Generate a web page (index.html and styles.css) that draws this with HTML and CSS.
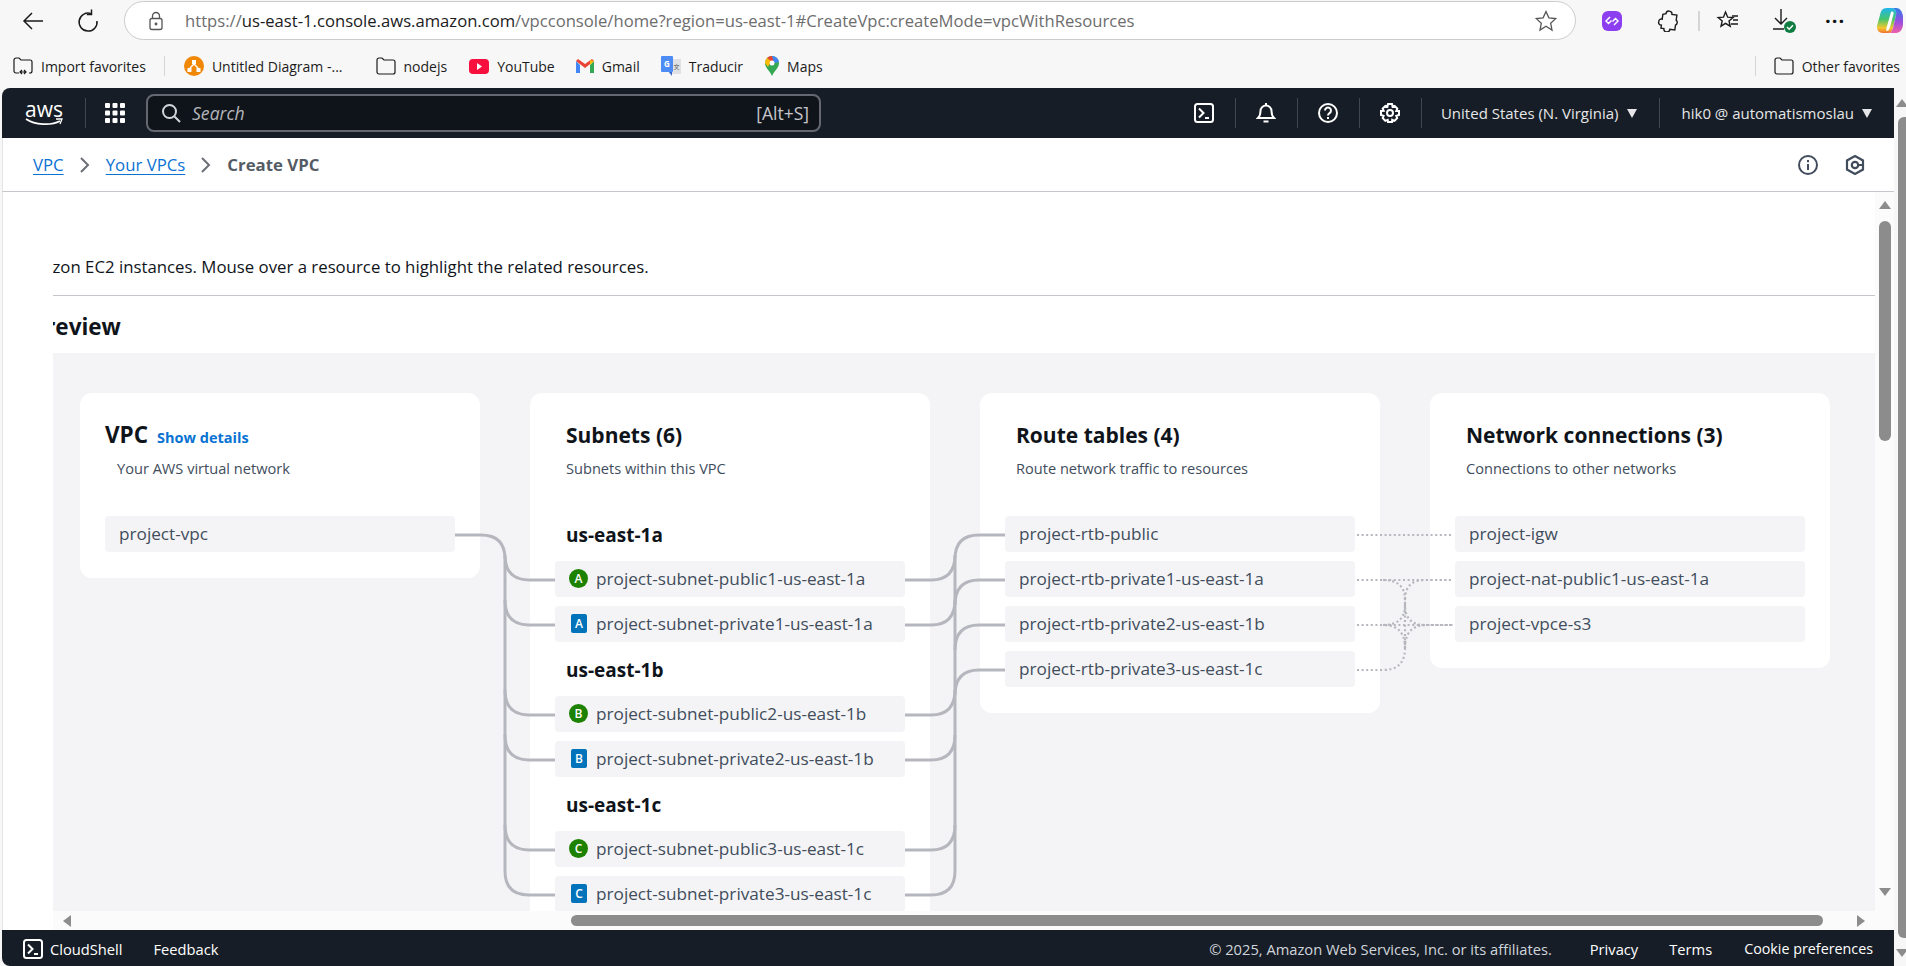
FILE: index.html
```html
<!DOCTYPE html>
<html lang="en">
<head>
  <meta charset="UTF-8">
  <title>Create VPC</title>
  <link rel="stylesheet" href="styles.css">
</head>
<body>

  <!-- browser toolbar -->
  <div class="toolbar">
    <svg class="tool back" width="24" height="24" viewBox="0 0 24 24" fill="none" stroke="#1b1b1b" stroke-width="1.5"><path d="M22 12H3M11 4l-8 8 8 8"/></svg>
    <svg class="tool reload" width="24" height="24" viewBox="0 0 24 24" fill="none" stroke="#1b1b1b" stroke-width="1.5"><path d="M15 4.6A9 9 0 1 0 21 12"/><path d="M15.5 0.5V5.4H10.8"/></svg>
    <div class="address">
      <svg class="lock" width="18" height="20" viewBox="0 0 18 20" fill="none" stroke="#555" stroke-width="1.3"><rect x="3" y="7.5" width="12" height="11" rx="2"/><path d="M5.5 7.5V5a3.5 3.5 0 0 1 7 0v2.5"/><circle cx="9" cy="13" r="0.8" fill="#555"/></svg>
      <span class="url">https://<b>us-east-1.console.aws.amazon.com</b>/vpcconsole/home?region=us-east-1#CreateVpc:createMode=vpcWithResources</span>
      <svg class="star" width="24" height="24" viewBox="0 0 24 24" fill="none" stroke="#555" stroke-width="1.3"><path d="M12 2.5l2.9 6.3 6.8.8-5 4.7 1.3 6.8L12 17.2l-6 3.9 1.3-6.8-5-4.7 6.800-.8z"/></svg>
    </div>
    <div class="ext-icons">
      <svg class="ext" width="22" height="22" viewBox="0 0 22 22"><rect x="1" y="1" width="20" height="20" rx="6" fill="#8c3ff0"/><path d="M9 7l-4 4 2.500 2.500 3-3M13 15l4-4-2.500-2.500-3 3" fill="none" stroke="#fff" stroke-width="1.500"/></svg>
      <svg class="ext puzzle" width="22" height="22" viewBox="0 0 22 22" fill="none" stroke="#1b1b1b" stroke-width="1.4"><path d="M8 4a3 3 0 0 1 6 0h5v5a3 3 0 0 1 0 5v5h-5a3 3 0 0 1-6 0H5v-3a2.500 2.500 0 0 1-3-3 2.500 2.500 0 0 1 3-3V5z" transform="rotate(8 11 11)"/></svg>
      <span class="tool-sep"></span>
      <svg class="ext fav" width="24" height="22" viewBox="0 0 24 22" fill="none" stroke="#1b1b1b" stroke-width="1.4"><path d="M9.500 2l2.200 5.200 5.300.4-4 3.400 1.200 5.200-4.700-2.800L5 16.200l1.200-5.200-4-3.400 5.300-.4z"/><path d="M16 6h6M17 10h5M15 14h7"/></svg>
      <svg class="ext down" width="26" height="26" viewBox="0 0 26 26" fill="none" stroke="#1b1b1b" stroke-width="1.4"><path d="M10 1v15M4 10l6 6 6-6M2 21h11"/><circle cx="19" cy="19" r="6" fill="#107c41" stroke="none"/><path d="M16 19l2.200 2.200 3.800-4" stroke="#fff" stroke-width="1.500"/></svg>
      <span class="ext more">···</span>
      <svg class="ext copilot" width="28" height="28" viewBox="0 0 28 28">
        <defs>
          <linearGradient id="cpA" x1="0" y1="0" x2="0" y2="1"><stop offset="0" stop-color="#1fb5f0"/><stop offset="0.45" stop-color="#45c66b"/><stop offset="0.8" stop-color="#f5c82e"/><stop offset="1" stop-color="#f07030"/></linearGradient>
          <linearGradient id="cpB" x1="0" y1="0" x2="0" y2="1"><stop offset="0" stop-color="#2a7be8"/><stop offset="0.55" stop-color="#9a4ee0"/><stop offset="1" stop-color="#ef5ea6"/></linearGradient>
        </defs>
        <path d="M11 1C6 1 5 4 4 8L1.500 17C0 22 2 26 7 26h5c3 0 4-2 5-5L20 8C21 4 19 1 15 1z" fill="url(#cpA)"/>
        <path d="M15 1h5c4 0 6 3 7 8v8c0 5-3 9-7 9h-8c3 0 4-2 5-5l3-13c1-4-1-7-5-7z" fill="url(#cpB)"/>
        <path d="M15 5c2-1 3 0 2.500 2L14 20c-1 3-2 4-3 4-1 0-1-1-.5-3z" fill="#fff"/>
      </svg>
    </div>
  </div>

  <!-- favorites bar -->
  <div class="favbar">
    <span class="bm first">
      <svg width="20" height="18" viewBox="0 0 20 18" fill="none" stroke="#1b1b1b" stroke-width="1.2"><path d="M6 16H3a2 2 0 0 1-2-2V3a2 2 0 0 1 2-2h3l2 2h9a2 2 0 0 1 2 2v9a2 2 0 0 1-2 2h-1M7 15h6M9 13l-2 2 2 2M11 13l2 2-2 2"/></svg>
      Import favorites
    </span>
    <span class="fav-sep"></span>
    <span class="bm drawio">
      <svg width="20" height="20" viewBox="0 0 20 20"><circle cx="10" cy="10" r="10" fill="#f08705"/><path d="M8 4h4v4H8zM3.500 12h4v4h-4zM12.500 12h4v4h-4z" fill="#fff"/><path d="M10 8l-4 4M10 8l4 4" stroke="#fff" stroke-width="1.400"/></svg>
      Untitled Diagram -...
    </span>
    <span class="bm nodejs">
      <svg width="20" height="18" viewBox="0 0 20 18" fill="none" stroke="#1b1b1b" stroke-width="1.2"><path d="M1 3a2 2 0 0 1 2-2h3l2 2h9a2 2 0 0 1 2 2v10a2 2 0 0 1-2 2H3a2 2 0 0 1-2-2z"/></svg>
      nodejs
    </span>
    <span class="bm youtube">
      <svg width="20" height="15" viewBox="0 0 20 15"><rect width="20" height="15" rx="4" fill="#f70f3d"/><path d="M8 4l5 3.500-5 3.500z" fill="#fff"/></svg>
      YouTube
    </span>
    <span class="bm gmail">
      <svg width="18" height="14" viewBox="0 0 18 14"><path d="M0 2v12h4V6z" fill="#4285f4"/><path d="M14 6v8h4V2z" fill="#34a853"/><path d="M0 2l9 7 9-7-2-2-7 5-7-5z" fill="#ea4335"/><path d="M14 1l4 1-4 4z" fill="#fbbc04"/></svg>
      Gmail
    </span>
    <span class="bm translate">
      <svg width="20" height="20" viewBox="0 0 20 20"><rect x="8" y="3" width="12" height="15" fill="#dfe1e5"/><rect width="12" height="16" rx="1" fill="#4d8bf5"/><path d="M8 16l3 4v-4z" fill="#3a66c8"/><text x="3" y="11" class="g-mark">G</text><text x="12.500" y="13" class="tr-mark">文</text></svg>
      Traducir
    </span>
    <span class="bm maps">
      <svg width="14" height="20" viewBox="0 0 14 20"><path d="M7 20C5 15 0 12 0 7a7 7 0 0 1 14 0c0 5-5 8-7 13z" fill="#34a853"/><path d="M2 2A7 7 0 0 1 7 0l2 4-5 5z" fill="#ea4335"/><path d="M0 7a7 7 0 0 1 2-5l4 3-3 6z" fill="#fbbc04"/><path d="M7 0a7 7 0 0 1 7 6l-5 1z" fill="#4285f4"/><circle cx="7" cy="7" r="2.500" fill="#fff"/></svg>
      Maps
    </span>
    <span class="fav-sep right-sep"></span>
    <span class="bm other">
      <svg width="20" height="18" viewBox="0 0 20 18" fill="none" stroke="#1b1b1b" stroke-width="1.2"><path d="M1 3a2 2 0 0 1 2-2h3l2 2h9a2 2 0 0 1 2 2v10a2 2 0 0 1-2 2H3a2 2 0 0 1-2-2z"/></svg>
      Other favorites
    </span>
  </div>

  <div class="console-wrap">
    <div class="console">

      <!-- aws top nav -->
      <header class="topnav">
        <div class="logo">
          <span class="logo-text">aws</span>
          <svg width="38" height="8" viewBox="0 0 38 8" fill="none"><path d="M1 1c9 6 25 7 34 2" stroke="#fff" stroke-width="1.800"/><path d="M31 1l6 0-2 5" stroke="#fff" stroke-width="1.300"/></svg>
        </div>
        <span class="nav-sep logo-sep"></span>
        <svg class="grid-icon" width="20" height="20" viewBox="0 0 20 20" fill="#fff"><rect width="5" height="5" rx="1"/><rect x="7.500" width="5" height="5" rx="1"/><rect x="15" width="5" height="5" rx="1"/><rect y="7.500" width="5" height="5" rx="1"/><rect x="7.500" y="7.500" width="5" height="5" rx="1"/><rect x="15" y="7.500" width="5" height="5" rx="1"/><rect y="15" width="5" height="5" rx="1"/><rect x="7.500" y="15" width="5" height="5" rx="1"/><rect x="15" y="15" width="5" height="5" rx="1"/></svg>
        <div class="search">
          <svg width="20" height="20" viewBox="0 0 20 20" fill="none" stroke="#d1d5db" stroke-width="2"><circle cx="8.500" cy="8.500" r="6.500"/><path d="M13.500 13.500l5.500 5.500"/></svg>
          <span class="search-ph">Search</span>
          <span class="search-key">[Alt+S]</span>
        </div>
        <div class="nav-right">
          <span class="nav-btn">
            <svg width="20" height="20" viewBox="0 0 20 20" fill="none" stroke="#fff" stroke-width="2"><rect x="1" y="1" width="18" height="18" rx="2.500"/><path d="M5 5.500l4.500 4.500L5 14.500M11 15h4"/></svg>
          </span>
          <span class="nav-btn">
            <svg width="20" height="22" viewBox="0 0 20 22" fill="none" stroke="#fff" stroke-width="2"><path d="M2 16h16c-2-2-2.500-4-2.500-7a5.500 5.500 0 0 0-11 0c0 3-.5 5-2.500 7zM7.500 19.500h5M10 1v2"/></svg>
          </span>
          <span class="nav-btn">
            <svg width="20" height="20" viewBox="0 0 20 20" fill="none" stroke="#fff" stroke-width="2"><circle cx="10" cy="10" r="9"/><path d="M7 7.500a3 3 0 1 1 4.500 2.600c-1 .6-1.500 1-1.500 2.400"/><path d="M10 14v2"/></svg>
          </span>
          <span class="nav-btn">
            <svg width="20" height="20" viewBox="0 0 20 20" fill="none" stroke="#fff" stroke-width="2"><path d="M8 1h4l.6 2.800 2-.9 2.700 2.700-1 2.400L19 8v4l-2.700.9.9 2.200-2.600 2.700-2.400-1L12 19H8l-.3-2.200-2.400 1-2.600-2.700.9-2.200L1 12V8l2.700-.1-1-2.300 2.700-2.700 2 .9z"/><circle cx="10" cy="10" r="3"/></svg>
          </span>
          <span class="nav-menu region">United States (N. Virginia) <i class="caret"></i></span>
          <span class="nav-menu user">hik0 @ automatismoslau <i class="caret"></i></span>
        </div>
      </header>

      <!-- breadcrumbs -->
      <nav class="crumbs">
        <a>VPC</a>
        <svg width="12" height="18" viewBox="0 0 12 18" fill="none" stroke="#6b6f76" stroke-width="2"><path d="M2 2l7 7-7 7"/></svg>
        <a>Your VPCs</a>
        <svg width="12" height="18" viewBox="0 0 12 18" fill="none" stroke="#6b6f76" stroke-width="2"><path d="M2 2l7 7-7 7"/></svg>
        <span class="current">Create VPC</span>
        <span class="crumb-icons">
          <svg width="20" height="20" viewBox="0 0 20 20" fill="none" stroke="#414d5c" stroke-width="2"><circle cx="10" cy="10" r="9"/><path d="M10 9v6M10 5v2.200"/></svg>
          <svg width="20" height="20" viewBox="0 0 20 20" fill="none" stroke="#414d5c" stroke-width="2.200"><path d="M10 1l8 4.500v9L10 19l-8-4.500v-9z"/><circle cx="10" cy="10" r="3.200"/><path d="M12 10h5"/></svg>
        </span>
      </nav>

      <div class="content">
        <div class="scroll-col">
          <div class="clip">
            <p class="intro">Amazon EC2 instances. Mouse over a resource to highlight the related resources.</p>
            <hr class="rule">
            <h2 class="preview-title">Preview</h2>

            <div class="panel">
              <div class="cards">

                <section class="card">
                  <div class="card-head vpc-head">
                    <h3>VPC <a class="details">Show details</a></h3>
                    <p>Your AWS virtual network</p>
                  </div>
                  <div class="rows">
                    <div class="item">project-vpc</div>
                  </div>
                </section>

                <section class="card">
                  <div class="card-head">
                    <h3>Subnets (6)</h3>
                    <p>Subnets within this VPC</p>
                  </div>
                  <div class="rows">
                    <h4 class="az">us-east-1a</h4>
                    <div class="item subnet"><span class="badge pub">A</span>project-subnet-public1-us-east-1a</div>
                    <div class="item subnet"><span class="badge priv">A</span>project-subnet-private1-us-east-1a</div>
                    <h4 class="az">us-east-1b</h4>
                    <div class="item subnet"><span class="badge pub">B</span>project-subnet-public2-us-east-1b</div>
                    <div class="item subnet"><span class="badge priv">B</span>project-subnet-private2-us-east-1b</div>
                    <h4 class="az">us-east-1c</h4>
                    <div class="item subnet"><span class="badge pub">C</span>project-subnet-public3-us-east-1c</div>
                    <div class="item subnet"><span class="badge priv">C</span>project-subnet-private3-us-east-1c</div>
                  </div>
                </section>

                <section class="card">
                  <div class="card-head">
                    <h3>Route tables (4)</h3>
                    <p>Route network traffic to resources</p>
                  </div>
                  <div class="rows">
                    <div class="item">project-rtb-public</div>
                    <div class="item">project-rtb-private1-us-east-1a</div>
                    <div class="item">project-rtb-private2-us-east-1b</div>
                    <div class="item">project-rtb-private3-us-east-1c</div>
                  </div>
                </section>

                <section class="card">
                  <div class="card-head">
                    <h3>Network connections (3)</h3>
                    <p>Connections to other networks</p>
                  </div>
                  <div class="rows">
                    <div class="item">project-igw</div>
                    <div class="item">project-nat-public1-us-east-1a</div>
                    <div class="item">project-vpce-s3</div>
                  </div>
                </section>

              </div>

              <!-- lines between the cards -->
              <svg class="links" width="1822" height="600" viewBox="0 0 1822 600" fill="none">
                <g class="solid">
                  <path d="M402 182H428Q452 182 452 206V518Q452 542 476 542H502"/>
                  <path d="M452 202Q452 227 476 227H502"/>
                  <path d="M452 247Q452 272 476 272H502"/>
                  <path d="M452 337Q452 362 476 362H502"/>
                  <path d="M452 382Q452 407 476 407H502"/>
                  <path d="M452 472Q452 497 476 497H502"/>
                  <path d="M852 227H878Q902 227 902 202"/>
                  <path d="M852 272H878Q902 272 902 247"/>
                  <path d="M852 362H878Q902 362 902 337"/>
                  <path d="M852 407H878Q902 407 902 382"/>
                  <path d="M852 497H878Q902 497 902 472"/>
                  <path d="M852 542H878Q902 542 902 518V206Q902 182 926 182H952"/>
                  <path d="M902 252Q902 227 926 227H952"/>
                  <path d="M902 297Q902 272 926 272H952"/>
                  <path d="M902 342Q902 317 926 317H952"/>
                </g>
                <g class="dotted">
                  <path d="M1304 182H1400"/>
                  <path d="M1304 227H1400"/>
                  <path d="M1304 272H1400"/>
                  <path d="M1304 317H1330Q1352 317 1352 295V247Q1352 227 1372 227H1400"/>
                  <path d="M1330 227Q1352 227 1352 247V252Q1352 272 1372 272H1400"/>
                  <path d="M1330 272Q1352 272 1352 252"/>
                  <path d="M1352 295Q1352 272 1374 272"/>
                  <path d="M1352 295Q1352 272 1330 272"/>
                </g>
              </svg>
            </div>
          </div>

          <div class="hbar">
            <i class="arrow-left"></i>
            <span class="hthumb"></span>
            <i class="arrow-right"></i>
          </div>
        </div>

        <div class="vbar">
          <i class="arrow-up"></i>
          <span class="vthumb"></span>
          <i class="arrow-down"></i>
        </div>
      </div>

      <!-- console footer -->
      <footer class="footer">
        <svg width="20" height="20" viewBox="0 0 20 20" fill="none" stroke="#fff" stroke-width="2"><rect x="1" y="1" width="18" height="18" rx="2.500"/><path d="M5 5.500l4.500 4.500L5 14.500M11 15h4"/></svg>
        <span class="foot-link shell">CloudShell</span>
        <span class="foot-link feedback">Feedback</span>
        <span class="copy">© 2025, Amazon Web Services, Inc. or its affiliates.</span>
        <span class="foot-link privacy">Privacy</span>
        <span class="foot-link terms">Terms</span>
        <span class="foot-link cookie">Cookie preferences</span>
      </footer>
    </div>

    <div class="page-scroll">
      <i class="arrow-up"></i>
      <span class="page-thumb"></span>
      <i class="arrow-down"></i>
    </div>
  </div>

</body>
</html>
```

FILE: styles.css
```css
html, body {
  margin: 0;
  height: 966px;
  overflow: hidden;
}

body {
  display: flex;
  flex-direction: column;
  background: #f7f7f7;
  font-family: "Open Sans", "Noto Sans", sans-serif;
  color: #0f141a;
}

/* browser chrome */
.toolbar {
  height: 44px;
  display: flex;
  align-items: flex-start;
  padding-top: 1px;
  box-sizing: border-box;
}

.tool {
  flex: none;
  margin-top: 8px;
}

.back { margin-left: 21px; }
.reload { margin-left: 31px; }

.address {
  flex: none;
  width: 1452px;
  height: 39px;
  margin-left: 24px;
  box-sizing: border-box;
  border: 1px solid #ccc;
  border-radius: 20px;
  background: #fff;
  display: flex;
  align-items: center;
  padding-left: 22px;
}

.url {
  margin-left: 20px;
  font-size: 16.65px;
  color: #6d6d6d;
  white-space: nowrap;
}

.url b {
  font-weight: 400;
  color: #1b1b1b;
}

.star { margin-left: auto; margin-right: 17px; }

.ext-icons {
  flex: 1;
  display: flex;
  align-items: center;
  height: 39px;
}

.ext { flex: none; }
.ext-icons > :first-child { margin-left: 25px; }
.puzzle { margin-left: 34px; }
.tool-sep { width: 2px; height: 20px; background: #d5d5d5; margin-left: 19px; }
.fav { margin-left: 16px; }
.down { margin-left: 31px; }
.more { margin-left: 28px; font-size: 20px; font-weight: 700; letter-spacing: 1px; line-height: 1; }
.copilot { margin-left: 31px; }

.favbar {
  height: 44px;
  display: flex;
  align-items: center;
  font-size: 14px;
  color: #1b1b1b;
  padding-right: 6px;
  box-sizing: border-box;
}

.bm {
  display: flex;
  align-items: center;
  white-space: nowrap;
  flex: none;
}

.bm svg { margin-right: 8px; }

.first { margin-left: 13px; }
.fav-sep { width: 1px; height: 20px; background: #d5d5d5; margin-left: 18px; flex: none; }
.drawio { margin-left: 19px; }
.nodejs { margin-left: 33px; }
.youtube { margin-left: 22px; }
.gmail { margin-left: 21px; }
.translate { margin-left: 21px; }
.maps { margin-left: 22px; }
.right-sep { margin-left: auto; }
.other { margin-left: 18px; }

.g-mark { font-size: 8px; font-weight: 700; fill: #fff; }
.tr-mark { font-size: 6px; fill: #555; font-family: "Noto Sans CJK SC", sans-serif; }

/* console */
.console-wrap {
  flex: 1;
  display: flex;
  min-height: 0;
}

.console {
  width: 1892px;
  margin-left: 2px;
  display: flex;
  flex-direction: column;
  background: #fff;
  border-radius: 8px 0 0 8px;
  overflow: hidden;
}

.topnav {
  height: 50px;
  flex: none;
  background: #161d26;
  display: flex;
  align-items: center;
  color: #fff;
}

.logo {
  margin-left: 23px;
  width: 38px;
  display: flex;
  flex-direction: column;
  align-items: center;
}

.logo-text {
  font-size: 21px;
  line-height: 17px;
  letter-spacing: 0;
}

.nav-sep {
  width: 1px;
  height: 30px;
  background: #424650;
}

.logo-sep { margin-left: 22px; }
.grid-icon { margin-left: 19px; }

.search {
  width: 675px;
  height: 38px;
  margin-left: 21px;
  box-sizing: border-box;
  border: 2px solid #656871;
  border-radius: 8px;
  background: #0f141a;
  display: flex;
  align-items: center;
  padding: 0 10px 0 13px;
}

.search-ph {
  margin-left: 11px;
  font-size: 17.6px;
  font-style: italic;
  color: #b4b4bb;
}

.search-key {
  margin-left: auto;
  font-size: 17.5px;
  color: #c6c6cd;
}

.nav-right {
  margin-left: auto;
  display: flex;
  align-items: center;
}

.nav-btn {
  width: 61px;
  height: 30px;
  border-right: 1px solid #424650;
  box-sizing: content-box;
  display: flex;
  align-items: center;
  justify-content: center;
}

.nav-menu {
  height: 30px;
  display: flex;
  align-items: center;
  font-size: 15px;
  color: #e6e6e8;
  white-space: nowrap;
  padding: 0 22px;
}

.region {
  padding-left: 19px;
  border-right: 1px solid #424650;
}

.caret {
  width: 0;
  height: 0;
  margin-left: 8px;
  border-left: 5px solid transparent;
  border-right: 5px solid transparent;
  border-top: 9px solid #e6e6e8;
}

.crumbs {
  height: 54px;
  flex: none;
  box-sizing: border-box;
  border-bottom: 1px solid #c6c6cd;
  border-left: 1px solid #e4e4e4;
  padding: 0 29px 0 30px;
  display: flex;
  align-items: center;
  font-size: 16.8px;
}

.crumbs a {
  color: #0972d3;
  text-decoration: underline;
  text-underline-offset: 3px;
}

.crumbs svg { margin: 0 15px; }

.current {
  color: #545b64;
  font-weight: 700;
}

.crumb-icons {
  margin-left: auto;
  display: flex;
  align-items: center;
}

.crumb-icons svg { margin: 0 0 0 27px; }

.content {
  flex: 1;
  display: flex;
  min-height: 0;
  border-left: 1px solid #e4e4e4;
}

.scroll-col {
  width: 1872px;
  flex: none;
  display: flex;
  flex-direction: column;
  padding-left: 50px;
  box-sizing: border-box;
}

.clip {
  flex: 1;
  min-height: 0;
  overflow: hidden;
}

.intro {
  margin: 64px 0 0 -36px;
  font-size: 16.8px;
  line-height: 22px;
  white-space: nowrap;
}

.rule {
  margin: 17px 0 0;
  border: none;
  border-top: 1px solid #c6c6cd;
}

.preview-title {
  margin: 19px 0 14px -22px;
  font-size: 22.5px;
  line-height: 24px;
  font-weight: 700;
}

.panel {
  position: relative;
  background: #f4f4f6;
  padding: 40px 0 40px 27px;
}

.cards {
  display: flex;
  align-items: flex-start;
  gap: 50px;
}

.card {
  width: 400px;
  flex: none;
  box-sizing: border-box;
  background: #fff;
  border-radius: 12px;
  padding: 28px 25px 26px;
}

.card-head {
  height: 95px;
  padding-left: 11px;
}

.card-head h3 {
  margin: 0;
  height: 28px;
  display: flex;
  align-items: baseline;
  font-size: 21px;
  line-height: 28px;
  font-weight: 700;
}

.card-head p {
  margin: 9px 0 0;
  font-size: 14.6px;
  line-height: 20px;
  color: #414d5c;
}

.vpc-head { padding-left: 0; }
.vpc-head h3 { font-size: 22.5px; }
.vpc-head p { padding-left: 12px; }

.details {
  margin-left: 9px;
  font-size: 14.5px;
  color: #0972d3;
}

.rows {
  display: flex;
  flex-direction: column;
  gap: 9px;
}

.item {
  height: 36px;
  background: #f4f4f6;
  border-radius: 4px;
  box-sizing: border-box;
  padding: 0 0 1px 14px;
  display: flex;
  align-items: center;
  font-size: 17.2px;
  color: #414d5c;
  white-space: nowrap;
}

.az {
  height: 36px;
  margin: 0;
  box-sizing: border-box;
  padding: 1px 0 0 11px;
  font-size: 19px;
  line-height: 36px;
  font-weight: 700;
}

.badge {
  flex: none;
  width: 19px;
  height: 19px;
  margin-right: 8px;
  display: flex;
  align-items: center;
  justify-content: center;
  color: #fff;
  font-size: 12px;
  font-weight: 600;
}

.pub {
  background: #1d8102;
  border-radius: 50%;
}

.priv {
  width: 16px;
  margin: 0 9px 0 2px;
  background: #0073bb;
  border-radius: 2px;
}

.links {
  position: absolute;
  top: 0;
  left: 0;
  pointer-events: none;
}

.solid path {
  stroke: #b6b7be;
  stroke-width: 3;
}

.dotted path {
  stroke: #b6b7be;
  stroke-width: 2.2;
  stroke-dasharray: 2 2.6;
}

/* scrollbars */
.hbar {
  height: 19px;
  flex: none;
  background: #fbfbfb;
  display: flex;
  align-items: center;
}

.arrow-left {
  width: 0;
  height: 0;
  margin-left: 10px;
  border-top: 6px solid transparent;
  border-bottom: 6px solid transparent;
  border-right: 8px solid #8c8c8c;
}

.arrow-right {
  width: 0;
  height: 0;
  margin-left: 34px;
  border-top: 6px solid transparent;
  border-bottom: 6px solid transparent;
  border-left: 8px solid #8c8c8c;
}

.hthumb {
  width: 1252px;
  height: 11px;
  margin-left: 500px;
  border-radius: 6px;
  background: #8c8c8c;
}

.vbar {
  flex: 1;
  background: #fbfbfb;
  display: flex;
  flex-direction: column;
  align-items: center;
  padding-top: 9px;
}

.arrow-up {
  flex: none;
  width: 0;
  height: 0;
  border-left: 6px solid transparent;
  border-right: 6px solid transparent;
  border-bottom: 8px solid #8c8c8c;
}

.arrow-down {
  flex: none;
  width: 0;
  height: 0;
  border-left: 6px solid transparent;
  border-right: 6px solid transparent;
  border-top: 8px solid #8c8c8c;
}

.vthumb {
  width: 12px;
  height: 220px;
  margin-top: 12px;
  border-radius: 6px;
  background: #8c8c8c;
}

.vbar .arrow-down { margin-top: 447px; }

.footer {
  height: 36px;
  flex: none;
  box-sizing: border-box;
  padding: 1px 0 0 21px;
  background: #161d26;
  color: #fff;
  display: flex;
  align-items: center;
  font-size: 14.7px;
  white-space: nowrap;
}

.shell { margin-left: 7px; }
.feedback { margin-left: 31px; }
.copy { margin-left: auto; color: #d1d5db; }
.privacy { margin-left: 38px; }
.terms { margin-left: 31px; }
.cookie { margin-left: 32px; margin-right: 21px; font-size: 14.3px; }

.page-scroll {
  flex: 1;
  display: flex;
  flex-direction: column;
  align-items: flex-end;
  padding-top: 11px;
}

.page-thumb {
  width: 8px;
  height: 821px;
  margin-top: 10px;
  border-radius: 6px 0 0 6px;
  background: #8c8c8c;
}

.page-scroll .arrow-down { margin-top: 11px; margin-right: -2px; }
.page-scroll .arrow-up { margin-right: -2px; }
```
